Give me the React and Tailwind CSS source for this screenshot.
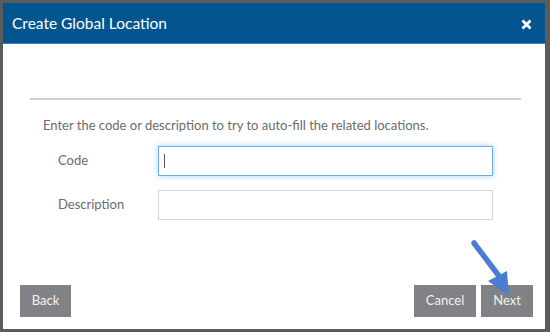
import React from "react";

export default function App() {
  return (
    <div className="w-[550px] h-[332px] bg-[#5b5b5b] pt-[3px] pl-[3px] overflow-hidden" style={{ fontFamily: "Lato, 'Open Sans', sans-serif" }}>
      <div className="relative w-[542px] h-[326px] bg-white flex flex-col">
        <div className="h-[41px] bg-[#02558f] border-b border-[#3f7fb5] flex items-center justify-between pl-[9px] pr-[13px] pt-[2px]">
          <span className="text-white text-[15.5px] leading-none">Create Global Location</span>
          <svg width="11" height="11" viewBox="0 0 11 11">
            <path d="M1.5 1.5 L9.5 9.5 M9.5 1.5 L1.5 9.5" stroke="white" strokeWidth="2.8" strokeLinecap="butt" />
          </svg>
        </div>
        <div className="mt-[54px] ml-[27px] mr-[24px] h-[2px] bg-[#cfcfcf]" />
        <div className="mt-[19px] pl-[40px] text-[13px] text-[#6b6b6b] leading-none">
          Enter the code or description to try to auto-fill the related locations.
        </div>
        <div className="mt-[14px] flex items-center">
          <div className="w-[155px] pl-[55px] text-[13px] text-[#6b6b6b]">Code</div>
          <div className="w-[335px] h-[30px] border border-[#66afe9] shadow-[0_0_6px_rgba(102,175,233,0.6)] flex items-center pl-[5px]">
            <div className="w-px h-[14px] bg-[#555]" />
          </div>
        </div>
        <div className="mt-[14px] flex items-center">
          <div className="w-[155px] pl-[55px] text-[13px] text-[#6b6b6b]">Description</div>
          <div className="w-[335px] h-[30px] border border-[#d6d6d6]" />
        </div>
        <div className="mt-auto mb-[12px] pl-[17px] pr-[12px] flex items-center">
          <button className="w-[51px] h-[32px] bg-[#808285] text-[#f2f2f2] text-[13px]">Back</button>
          <div className="flex-1" />
          <button className="w-[62px] h-[32px] bg-[#808285] text-[#f2f2f2] text-[13px]">Cancel</button>
          <button className="ml-[5px] w-[52px] h-[32px] bg-[#808285] text-[#f2f2f2] text-[13px]">Next</button>
        </div>
        <svg className="absolute left-[461px] top-[232px]" width="60" height="66" viewBox="0 0 60 66">
          <line x1="10" y1="8" x2="38" y2="45" stroke="#4a7dd1" strokeWidth="5.5" strokeLinecap="round" />
          <polygon points="24,46 45,61 43,36" fill="#4a7dd1" />
        </svg>
      </div>
    </div>
  );
}
